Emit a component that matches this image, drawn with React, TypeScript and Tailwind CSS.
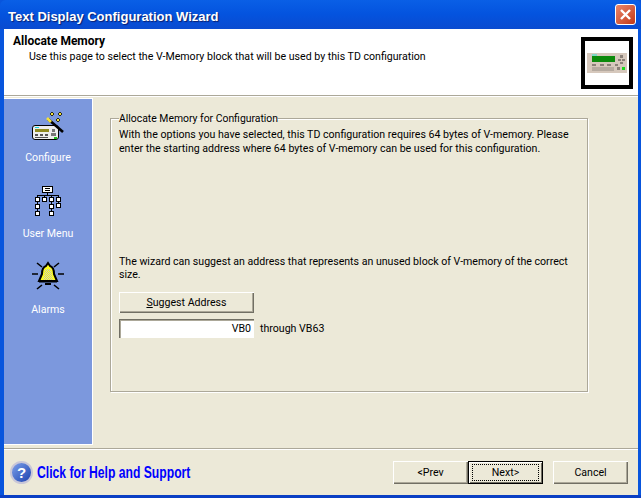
const ui = "font-['Roboto','Liberation_Sans',sans-serif] text-[10.6px] leading-[13px] text-black";

function CloseButton() {
  return (
    <div className="flex h-[21px] w-[21px] items-center justify-center rounded-[3px] border border-white bg-gradient-to-br from-[#e9866a] to-[#c2350f]">
      <svg width="13" height="13" viewBox="0 0 13 13">
        <path d="M2 2 L11 11 M11 2 L2 11" stroke="#fff" strokeWidth="2.4" />
      </svg>
    </div>
  );
}

function PanelIcon({ className }: { className?: string }) {
  return (
    <svg width="40" height="20" viewBox="0 0 40 20" className={className}>
      <rect width="40" height="20" fill="#d6c8bc" />
      <rect x="5" y="3" width="23" height="6" fill="#0c8a0c" />
      <rect x="5" y="1" width="5" height="2" fill="#7fd8c8" />
      <path d="M5 11h4v2H5zM13 11h4v2h-4zM20 11h4v2h-4zM28 11h3v2h-3zM33 2h3v3h-3zM31 6h3v2h-3zM35 6h3v2h-3zM33 9h3v2h-3z" fill="#8a8078" />
      <rect x="5" y="14" width="22" height="4" fill="#b5aaa0" />
      <rect x="30" y="14" width="3" height="3" fill="#8a8078" />
      <rect x="35" y="14" width="3" height="3" fill="#1ed81e" />
    </svg>
  );
}

function ConfigureIcon() {
  return (
    <svg width="32" height="29" viewBox="0 0 32 29" className="mb-[1px]">
      <rect x="0.5" y="13.5" width="26" height="14" rx="2.5" fill="#eeeeee" stroke="#000" />
      <rect x="3" y="15" width="4" height="1" fill="#19d4e0" />
      <rect x="3" y="17" width="14" height="3" fill="#8f8a20" />
      <path d="M3 22h3v2H3zM8 22h3v2H8zM13 22h3v2h-3zM3 25h13v1H3z" fill="#555" />
      <path d="M20 17h3v3h-3zM19 21h5v3h-5z" fill="#777" />
      <rect x="22" y="25" width="3" height="2" fill="#20c020" />
      <path d="M16 7 L31 20" stroke="#000" strokeWidth="2.6" />
      <path d="M15 6 L19 10" stroke="#f4e23a" strokeWidth="2.6" />
      <path d="M20 0l2 2-2 2-2-2zM28 0l2 2-2 2-2-2zM26 6l2 2-2 2-2-2z" fill="#f4e23a" stroke="#000" strokeWidth="0.8" />
    </svg>
  );
}

function MenuIcon() {
  const nodes = [
    [0, 11], [7, 11], [14, 11], [21, 11],
    [0, 18], [14, 18], [21, 17],
    [0, 25], [14, 25],
  ];
  return (
    <svg width="26" height="30" viewBox="0 0 26 30" shapeRendering="crispEdges" className="mb-[2px]">
      <path d="M12.5 6v3M2.5 9.5h21M2.5 9v20M9.5 9v3M16.5 9v20M23.5 9v12" stroke="#000" fill="none" />
      <rect x="7.5" y="0.5" width="10" height="6" fill="#fff" stroke="#000" />
      <path d="M10 2.5h5M10 4.5h5" stroke="#000" />
      {nodes.map(([x, y]) => (
        <rect key={`${x}-${y}`} x={x + 0.5} y={y + 0.5} width="4" height="4" fill="#fff" stroke="#000" />
      ))}
    </svg>
  );
}

function AlarmIcon() {
  return (
    <svg width="32" height="30" viewBox="0 0 32 30" className="mb-[3px]">
      <defs>
        <pattern id="dither" width="2" height="2" patternUnits="userSpaceOnUse">
          <rect width="2" height="2" fill="#ffff00" />
          <rect width="1" height="1" fill="#c8c8d0" />
          <rect x="1" y="1" width="1" height="1" fill="#c8c8d0" />
        </pattern>
      </defs>
      <path d="M16 2l2 3c3 1 4 5 4 8l3 7H7l3-7c0-3 1-7 4-8z" fill="#ffff20" stroke="#000" strokeWidth="2" />
      <path d="M13 8h6l2 11H11z" fill="url(#dither)" />
      <path d="M7 20.5h18" stroke="#000" strokeWidth="2" />
      <path d="M13 22h6v2h-6z" fill="#000" />
      <path d="M5 2l5 4M27 2l-5 4M0 13h6M26 13h6M5 28l5-4M27 28l-5-4" stroke="#000" strokeWidth="1.6" />
    </svg>
  );
}

function SideItem({ icon, label }: { icon: React.ReactNode; label: string }) {
  return (
    <div className="flex h-[76px] flex-col items-center">
      <div className="flex h-[41px] items-end justify-center">{icon}</div>
      <span className="mt-[9px] text-white">{label}</span>
    </div>
  );
}

function XpButton({ children, isDefault }: { children: React.ReactNode; isDefault?: boolean }) {
  return (
    <button
      className={`flex h-[23px] w-[75px] items-center justify-center bg-[#ece9d8] ${
        isDefault
          ? "border border-black shadow-[inset_1px_1px_0_#fff,inset_-1px_-1px_0_#716f64]"
          : "shadow-[inset_1px_1px_0_#fff,inset_-1px_-1px_0_#716f64,inset_-2px_-2px_0_#aca899]"
      }`}
    >
      {isDefault ? <span className="flex h-[17px] w-[67px] items-center justify-center border border-dotted border-black">{children}</span> : children}
    </button>
  );
}

export default function App() {
  return (
    <div className={`flex h-[498px] w-[641px] flex-col overflow-hidden bg-[#0855dd] ${ui}`}>
      <div className="flex h-[29px] shrink-0 items-center justify-between rounded-t-[6px] bg-gradient-to-b from-[#0a5fe6] via-[#0453de] to-[#0a4bd0] pl-[8px] pr-[5px]">
        <span className="mt-[3px] font-['Liberation_Sans',sans-serif] text-[13px] font-bold text-white [text-shadow:1px_1px_1px_#0a1f6e]">Text Display Configuration Wizard</span>
        <CloseButton />
      </div>

      <div className="ml-[4px] mr-[3px] flex min-h-0 flex-1 flex-col bg-[#ece9d8]">
        <div className="flex h-[66px] shrink-0 justify-between bg-white pr-[5px]">
          <div className="pl-[9px] pt-[6px]">
            <div className="text-[12px] font-bold">Allocate Memory</div>
            <div className="ml-[16px] mt-[2px]">Use this page to select the V-Memory block that will be used by this TD configuration</div>
          </div>
          <div className="mt-[8px] flex h-[52px] w-[52px] items-center justify-center border-[4px] border-black bg-white">
            <PanelIcon />
          </div>
        </div>
        <div className="h-[2px] shrink-0 border-b border-white bg-[#aca899]" />

        <div className="flex min-h-0 flex-1 pb-[3px] pt-[1px]">
          <div className="flex w-[89px] shrink-0 flex-col border-b border-r border-t border-white bg-[#7c98dd] pt-[2px]">
            <SideItem icon={<ConfigureIcon />} label="Configure" />
            <SideItem icon={<MenuIcon />} label="User Menu" />
            <SideItem icon={<AlarmIcon />} label="Alarms" />
          </div>
          <div className="flex-1 pl-[17px] pr-[50px] pt-[14px]">
            <fieldset className="h-[280px] border border-[#aca899] pl-[8px] pr-[8px] shadow-[inset_1px_1px_0_#fff,1px_1px_0_#fff]">
              <legend className="px-0 text-[10.4px]">Allocate Memory for Configuration</legend>
              <p className="mt-[3px] leading-[14px]">
                With the options you have selected, this TD configuration requires 64 bytes of V-memory. Please enter the starting address where 64 bytes of V-memory can be used for this configuration.
              </p>
              <p className="mt-[99px]">The wizard can suggest an address that represents an unused block of V-memory of the correct size.</p>
              <button className="mt-[11px] flex h-[21px] w-[135px] items-center justify-center bg-[#ece9d8] shadow-[inset_1px_1px_0_#fff,inset_-1px_-1px_0_#716f64,inset_-2px_-2px_0_#aca899]">
                <span>
                  <span className="underline">S</span>uggest Address
                </span>
              </button>
              <div className="mt-[6px] flex items-center gap-[6px]">
                <div className="flex h-[19px] w-[135px] items-center justify-end bg-white pr-[3px] shadow-[inset_1px_1px_0_#716f64,inset_2px_2px_0_#aca899]">VB0</div>
                <span>through VB63</span>
              </div>
            </fieldset>
          </div>
        </div>

        <div className="h-[2px] shrink-0 border-b border-white bg-[#aca899]" />
        <div className="flex h-[45px] shrink-0 items-center justify-between pl-[6px] pr-[10px]">
          <div className="flex items-center gap-[4px]">
            <div className="flex h-[23px] w-[23px] items-center justify-center rounded-full border-2 border-[#c9c7d8] bg-gradient-to-br from-[#7fa0ea] to-[#1c3fae] font-['Liberation_Sans',sans-serif] text-[15px] font-bold text-white">?</div>
            <span className="origin-left scale-x-[0.76] whitespace-nowrap font-['Liberation_Sans',sans-serif] text-[16px] font-bold text-[#0000ff]">Click for Help and Support</span>
          </div>
          <div className="flex items-center">
            <XpButton>&lt;Prev</XpButton>
            <XpButton isDefault>Next&gt;</XpButton>
            <div className="ml-[10px]">
              <XpButton>Cancel</XpButton>
            </div>
          </div>
        </div>
      </div>
      <div className="h-[3px] shrink-0 bg-[#0a3fc4]" />
    </div>
  );
}
